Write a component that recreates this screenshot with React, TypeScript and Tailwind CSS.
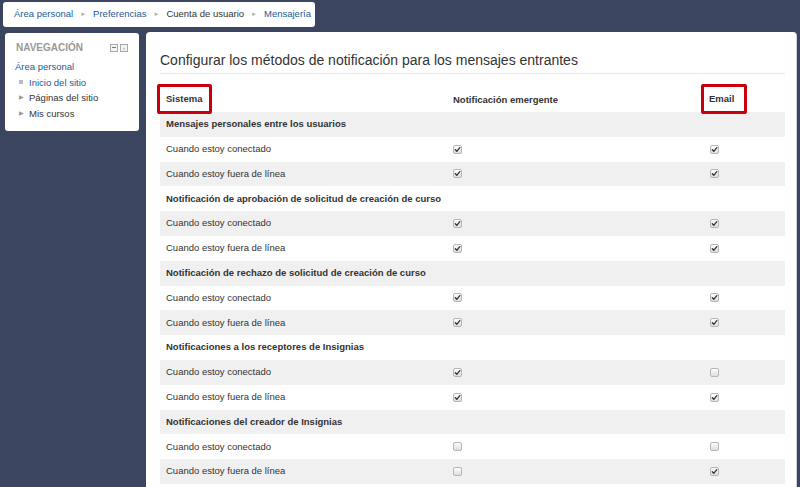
import React from "react";

type Row =
  | { kind: "group"; label: string }
  | { kind: "item"; label: string; popup: boolean; email: boolean };

const rows: Row[] = [
  { kind: "group", label: "Mensajes personales entre los usuarios" },
  { kind: "item", label: "Cuando estoy conectado", popup: true, email: true },
  { kind: "item", label: "Cuando estoy fuera de línea", popup: true, email: true },
  { kind: "group", label: "Notificación de aprobación de solicitud de creación de curso" },
  { kind: "item", label: "Cuando estoy conectado", popup: true, email: true },
  { kind: "item", label: "Cuando estoy fuera de línea", popup: true, email: true },
  { kind: "group", label: "Notificación de rechazo de solicitud de creación de curso" },
  { kind: "item", label: "Cuando estoy conectado", popup: true, email: true },
  { kind: "item", label: "Cuando estoy fuera de línea", popup: true, email: true },
  { kind: "group", label: "Notificaciones a los receptores de Insignias" },
  { kind: "item", label: "Cuando estoy conectado", popup: true, email: false },
  { kind: "item", label: "Cuando estoy fuera de línea", popup: true, email: true },
  { kind: "group", label: "Notificaciones del creador de Insignias" },
  { kind: "item", label: "Cuando estoy conectado", popup: false, email: false },
  { kind: "item", label: "Cuando estoy fuera de línea", popup: false, email: true },
];

function Checkbox({ checked }: { checked: boolean }) {
  return (
    <svg width="9" height="9" viewBox="0 0 9 9" className="block">
      <defs>
        <linearGradient id="cbg" x1="0" y1="0" x2="0" y2="1">
          <stop offset="0" stopColor="#ffffff" />
          <stop offset="1" stopColor="#dcdcdc" />
        </linearGradient>
      </defs>
      <rect x="0.5" y="0.5" width="8" height="8" rx="1.5" fill="url(#cbg)" stroke="#b5b5b5" />
      {checked && (
        <path d="M2.3 4.8 L3.8 6.3 L6.8 2.6" fill="none" stroke="#333" strokeWidth="1.3" strokeLinecap="round" strokeLinejoin="round" />
      )}
    </svg>
  );
}

function Sep() {
  return <span className="text-[6px] text-[#b0b0b0] mx-[7px]">►</span>;
}

export default function App() {
  return (
    <div
      className="w-[800px] h-[487px] overflow-hidden bg-[#3c4560] text-[#333]"
      style={{ fontFamily: '"Liberation Sans", Arial, sans-serif' }}
    >
      {/* Breadcrumb */}
      <div className="ml-[3px] mt-[2px] w-[312px] h-[25px] rounded-[3px] bg-white flex items-center pl-[11px] text-[9.5px] whitespace-nowrap">
        <span className="text-[#1d5a95]">Área personal</span>
        <Sep />
        <span className="text-[#1d5a95]">Preferencias</span>
        <Sep />
        <span>Cuenta de usuario</span>
        <Sep />
        <span className="text-[#1d5a95]">Mensajería</span>
      </div>

      <div className="flex items-start mt-[5px]">
        {/* Navigation block */}
        <div className="ml-[5px] mt-[1px] w-[134px] h-[98px] rounded-[3px] bg-white pt-[7px] pl-[10px] pr-[10px]">
          <div className="flex items-center justify-between">
            <span className="text-[10px] font-bold text-[#999] ml-[1px]">NAVEGACIÓN</span>
            <div className="flex gap-[2px] mr-[1px]">
              <span className="w-[8px] h-[8px] border border-[#aaa] bg-[#f4f4f4] flex items-center justify-center">
                <span className="w-[4px] h-[1px] bg-[#777]" />
              </span>
              <span className="w-[8px] h-[8px] border border-[#aaa] bg-[#f4f4f4] flex items-center justify-center text-[6px] leading-none text-[#777]">
                ‹
              </span>
            </div>
          </div>
          <div className="mt-[4px] text-[9.5px] leading-[15.5px] whitespace-nowrap">
            <div className="text-[#1d5a95]">Área personal</div>
            <div className="flex items-center">
              <span className="w-[4px] h-[4px] bg-[#bbb] ml-[4px] mr-[6px]" />
              <span className="text-[#1d5a95]">Inicio del sitio</span>
            </div>
            <div className="flex items-center">
              <span className="text-[6px] text-[#999] ml-[4px] mr-[5px]">▶</span>
              <span>Páginas del sitio</span>
            </div>
            <div className="flex items-center">
              <span className="text-[6px] text-[#999] ml-[4px] mr-[5px]">▶</span>
              <span>Mis cursos</span>
            </div>
          </div>
        </div>

        {/* Main panel */}
        <div className="ml-[7px] w-[651px] h-[460px] rounded-t-[4px] bg-white border-r border-[#cfd3da] pl-[14px] pr-[11px] pt-[18px]">
          <h2 className="text-[14px] leading-[20px] font-normal text-[#333] pb-[3px] border-b border-[#e8e8e8] whitespace-nowrap">
            Configurar los métodos de notificación para los mensajes entrantes
          </h2>

          <div className="mt-[10px] grid grid-cols-[287px_256px_82px] h-[28px] items-center text-[9.5px] font-bold">
            <div className="pl-[6px]">
              <span className="-ml-[9px] inline-block border-[3px] border-[#c8000b] rounded-[2px] pl-[6px] pr-[7px] py-[5px]">
                Sistema
              </span>
            </div>
            <div className="pl-[6px] pt-[2px]">Notificación emergente</div>
            <div className="pl-[6px]">
              <span className="-ml-[8px] inline-block border-[3px] border-[#c8000b] rounded-[2px] pl-[5px] pr-[10px] py-[5px]">
                Email
              </span>
            </div>
          </div>

          <div className="text-[9.5px]">
            {rows.map((r, i) => (
              <div
                key={i}
                className={`grid grid-cols-[287px_256px_82px] h-[24.8px] items-center ${
                  i % 2 === 0 ? "bg-[#f0f0f0]" : "bg-white"
                }`}
              >
                {r.kind === "group" ? (
                  <div className="pl-[6px] font-bold col-span-3">{r.label}</div>
                ) : (
                  <>
                    <div className="pl-[6px]">{r.label}</div>
                    <div className="pl-[6px]">
                      <Checkbox checked={r.popup} />
                    </div>
                    <div className="pl-[7px]">
                      <Checkbox checked={r.email} />
                    </div>
                  </>
                )}
              </div>
            ))}
          </div>
        </div>
      </div>
    </div>
  );
}
